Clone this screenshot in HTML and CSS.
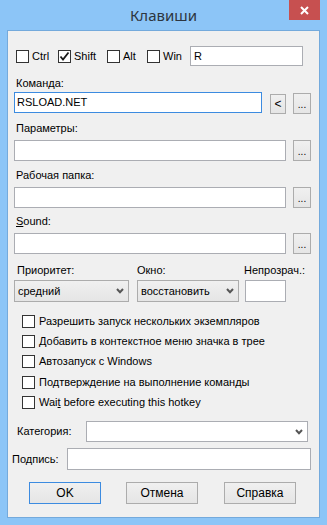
FILE: index.html
```html
<!DOCTYPE html>
<html lang="ru">
<head>
<meta charset="utf-8">
<title>Клавиши</title>
<link rel="stylesheet" href="styles.css">
</head>
<body>
<div class="window">
  <div class="titlebar">
    <span></span>
    <span class="title">Клавиши</span>
    <span class="close">
      <svg width="9" height="9" viewBox="0 0 9 9"><path d="M1 1 L8 8 M8 1 L1 8" stroke="#fff" stroke-width="2" fill="none"/></svg>
    </span>
  </div>
  <div class="client">
    <div class="hotkeys">
      <label class="chk w-ctrl"><span class="box"></span><span>Ctrl</span></label>
      <label class="chk w-shift"><span class="box"><svg width="11" height="11" viewBox="0 0 11 11"><path d="M1.5 5.5 L4 8.5 L9.5 1.5" stroke="#1a1a1a" stroke-width="1.8" fill="none"/></svg></span><span>Shift</span></label>
      <label class="chk w-alt"><span class="box"></span><span>Alt</span></label>
      <label class="chk w-win"><span class="box"></span><span>Win</span></label>
      <div class="field key">R</div>
    </div>

    <div class="lbl l-cmd">Команда:</div>
    <div class="frow cmd">
      <div class="field focus w-cmd">RSLOAD.NET</div>
      <div class="btn b-lt">&lt;</div>
      <div class="btn b-dots">...</div>
    </div>

    <div class="lbl l-par">Параметры:</div>
    <div class="frow">
      <div class="field w-full"></div>
      <div class="btn b-dots">...</div>
    </div>

    <div class="lbl l-dir">Рабочая папка:</div>
    <div class="frow">
      <div class="field w-full"></div>
      <div class="btn b-dots">...</div>
    </div>

    <div class="lbl l-snd"><u>S</u>ound:</div>
    <div class="frow">
      <div class="field w-full"></div>
      <div class="btn b-dots">...</div>
    </div>

    <div class="prow plabels">
      <div class="pc1 pl1">Приоритет:</div>
      <div class="pc2">Окно:</div>
      <div class="pc3 pl3">Непрозрач.:</div>
    </div>
    <div class="prow pinputs">
      <div class="pc1"><div class="combo s1"><span>средний</span><svg class="chev" width="8" height="6" viewBox="0 0 8 6"><path d="M1 1 L4 4.2 L7 1" stroke="#555" stroke-width="2" fill="none"/></svg></div></div>
      <div class="pc2"><div class="combo s2"><span>восстановить</span><svg class="chev" width="8" height="6" viewBox="0 0 8 6"><path d="M1 1 L4 4.2 L7 1" stroke="#555" stroke-width="2" fill="none"/></svg></div></div>
      <div class="pc3"><div class="field opac"></div></div>
    </div>

    <div class="checks">
      <label class="crow"><span class="box"></span><span>Разрешить запуск нескольких экземпляров</span></label>
      <label class="crow"><span class="box"></span><span>Добавить в контекстное меню значка в трее</span></label>
      <label class="crow"><span class="box"></span><span>Автозапуск с Windows</span></label>
      <label class="crow"><span class="box"></span><span>Подтверждение на выполнение команды</span></label>
      <label class="crow"><span class="box"></span><span>Wai<u>t</u> before executing this hotkey</span></label>
    </div>

    <div class="cat">
      <span class="cat-lbl">Категория:</span>
      <div class="field catbox"><svg class="chev" width="8" height="6" viewBox="0 0 8 6"><path d="M1 1 L4 4.2 L7 1" stroke="#555" stroke-width="2" fill="none"/></svg></div>
    </div>
    <div class="sig">
      <span class="sig-lbl">Подпись:</span>
      <div class="field sigbox"></div>
    </div>

    <div class="buttons">
      <div class="btn pb default">OK</div>
      <div class="btn pb">Отмена</div>
      <div class="btn pb last">Справка</div>
    </div>
  </div>
</div>
</body>
</html>
```
FILE: styles.css
```css
* { box-sizing: border-box; }
html, body { margin: 0; padding: 0; background: #8cc5f7; }

.window {
  width: 327px;
  height: 525px;
  background: #8cc5f7;
  display: flex;
  flex-direction: column;
}

.titlebar {
  height: 30px;
  display: grid;
  grid-template-columns: 1fr auto 1fr;
  align-items: start;
}
.title {
  font-family: "Noto Sans", "Liberation Sans", sans-serif;
  font-size: 15px;
  line-height: 20px;
  margin-top: 5px;
  color: #2d3640;
}
.close {
  justify-self: end;
  margin-right: 7px;
  width: 31px;
  height: 20px;
  background: #c75050;
  display: flex;
  align-items: center;
  justify-content: center;
}
.close svg { display: block; }

.client {
  margin: 0 7px 7px;
  flex: 1;
  border: 1px solid #74aadc;
  background: #f0f0f0;
  font-family: "Liberation Sans", Arial, sans-serif;
  font-size: 11px;
  line-height: 13px;
  color: #000;
  display: flex;
  flex-direction: column;
}

u { text-decoration: underline; text-underline-offset: 1px; }

/* generic controls */
.box {
  width: 13px;
  height: 13px;
  border: 1px solid #333;
  background: #fff;
  flex: none;
  display: flex;
  align-items: center;
  justify-content: center;
}
.box svg { display: block; }

.field {
  background: #fff;
  border: 1px solid #abadb3;
  height: 21px;
  padding: 0 2px;
  display: flex;
  align-items: center;
  white-space: nowrap;
}
.field.focus { border-color: #3c8be0; }

.btn {
  border: 1px solid #acacac;
  background: linear-gradient(#f0f0f0, #e5e5e5);
  display: flex;
  align-items: center;
  justify-content: center;
  flex: none;
}

/* hotkey row */
.hotkeys {
  margin-top: 15px;
  height: 20px;
  display: flex;
  align-items: center;
  padding-left: 8px;
}
.chk {
  display: flex;
  align-items: center;
  gap: 3px;
  flex: none;
}
.w-ctrl { width: 42px; }
.w-shift { width: 49px; }
.w-alt { width: 40px; }
.w-win { width: 43px; }
.field.key { width: 113px; height: 20px; padding-left: 3px; }

/* labels */
.lbl { padding-left: 8px; height: 13px; }
.l-cmd { margin-top: 11px; }
.l-par { margin-top: 8px; }
.l-dir { margin-top: 8px; }
.l-snd { margin-top: 7px; }

.frow {
  display: flex;
  align-items: flex-start;
  padding-left: 6px;
  margin-top: 5px;
  height: 21px;
}
.frow.cmd { margin-top: 2px; height: 22px; }
.w-cmd { width: 248px; }
.w-full { width: 272px; }
.b-lt { width: 16px; height: 20px; margin-left: 8px; margin-top: 2px; font-size: 12px; }
.b-dots { width: 18px; height: 21px; margin-left: 7px; font-size: 10px; padding-top: 2px; }
.frow.cmd .b-dots { margin-top: 1px; height: 21px; }

/* priority row */
.prow {
  display: flex;
  padding-left: 6px;
}
.plabels { margin-top: 10px; height: 13px; }
.pinputs { margin-top: 3px; height: 22px; }
.pc1 { width: 123px; flex: none; }
.pc2 { width: 108px; flex: none; }
.pc3 { flex: none; white-space: nowrap; }
.pl1 { padding-left: 3px; }
.pl3 { margin-left: -1px; }

.combo {
  height: 22px;
  border: 1px solid #acacac;
  background: linear-gradient(#f0f0f0, #e5e5e5);
  display: flex;
  align-items: center;
  justify-content: space-between;
  padding: 0 4px 0 3px;
}
.s1 { width: 115px; }
.s2 { width: 102px; }
.chev { display: block; flex: none; }
.field.opac { width: 41px; height: 22px; }

/* checks */
.checks {
  margin-top: 9px;
  padding-left: 14px;
  display: flex;
  flex-direction: column;
}
.crow {
  height: 20px;
  display: flex;
  align-items: center;
  gap: 4px;
  white-space: nowrap;
}
.crow:nth-child(4) { margin-top: 1px; }

/* category / signature */
.cat {
  margin-top: 9px;
  display: flex;
  align-items: center;
  height: 21px;
}
.cat-lbl { width: 78px; padding-left: 9px; flex: none; }
.field.catbox { width: 222px; height: 21px; justify-content: flex-end; padding-right: 4px; }

.sig {
  margin-top: 6px;
  display: flex;
  align-items: center;
  height: 22px;
}
.sig-lbl { width: 59px; padding-left: 4px; flex: none; }
.field.sigbox { width: 244px; height: 22px; }

/* buttons */
.buttons {
  margin-top: 12px;
  display: flex;
  padding-left: 21px;
  gap: 25px;
}
.pb { width: 72px; height: 22px; font-size: 12px; }
.pb.default { border-color: #3c8be0; }
.pb.last { margin-left: 1px; }
```
